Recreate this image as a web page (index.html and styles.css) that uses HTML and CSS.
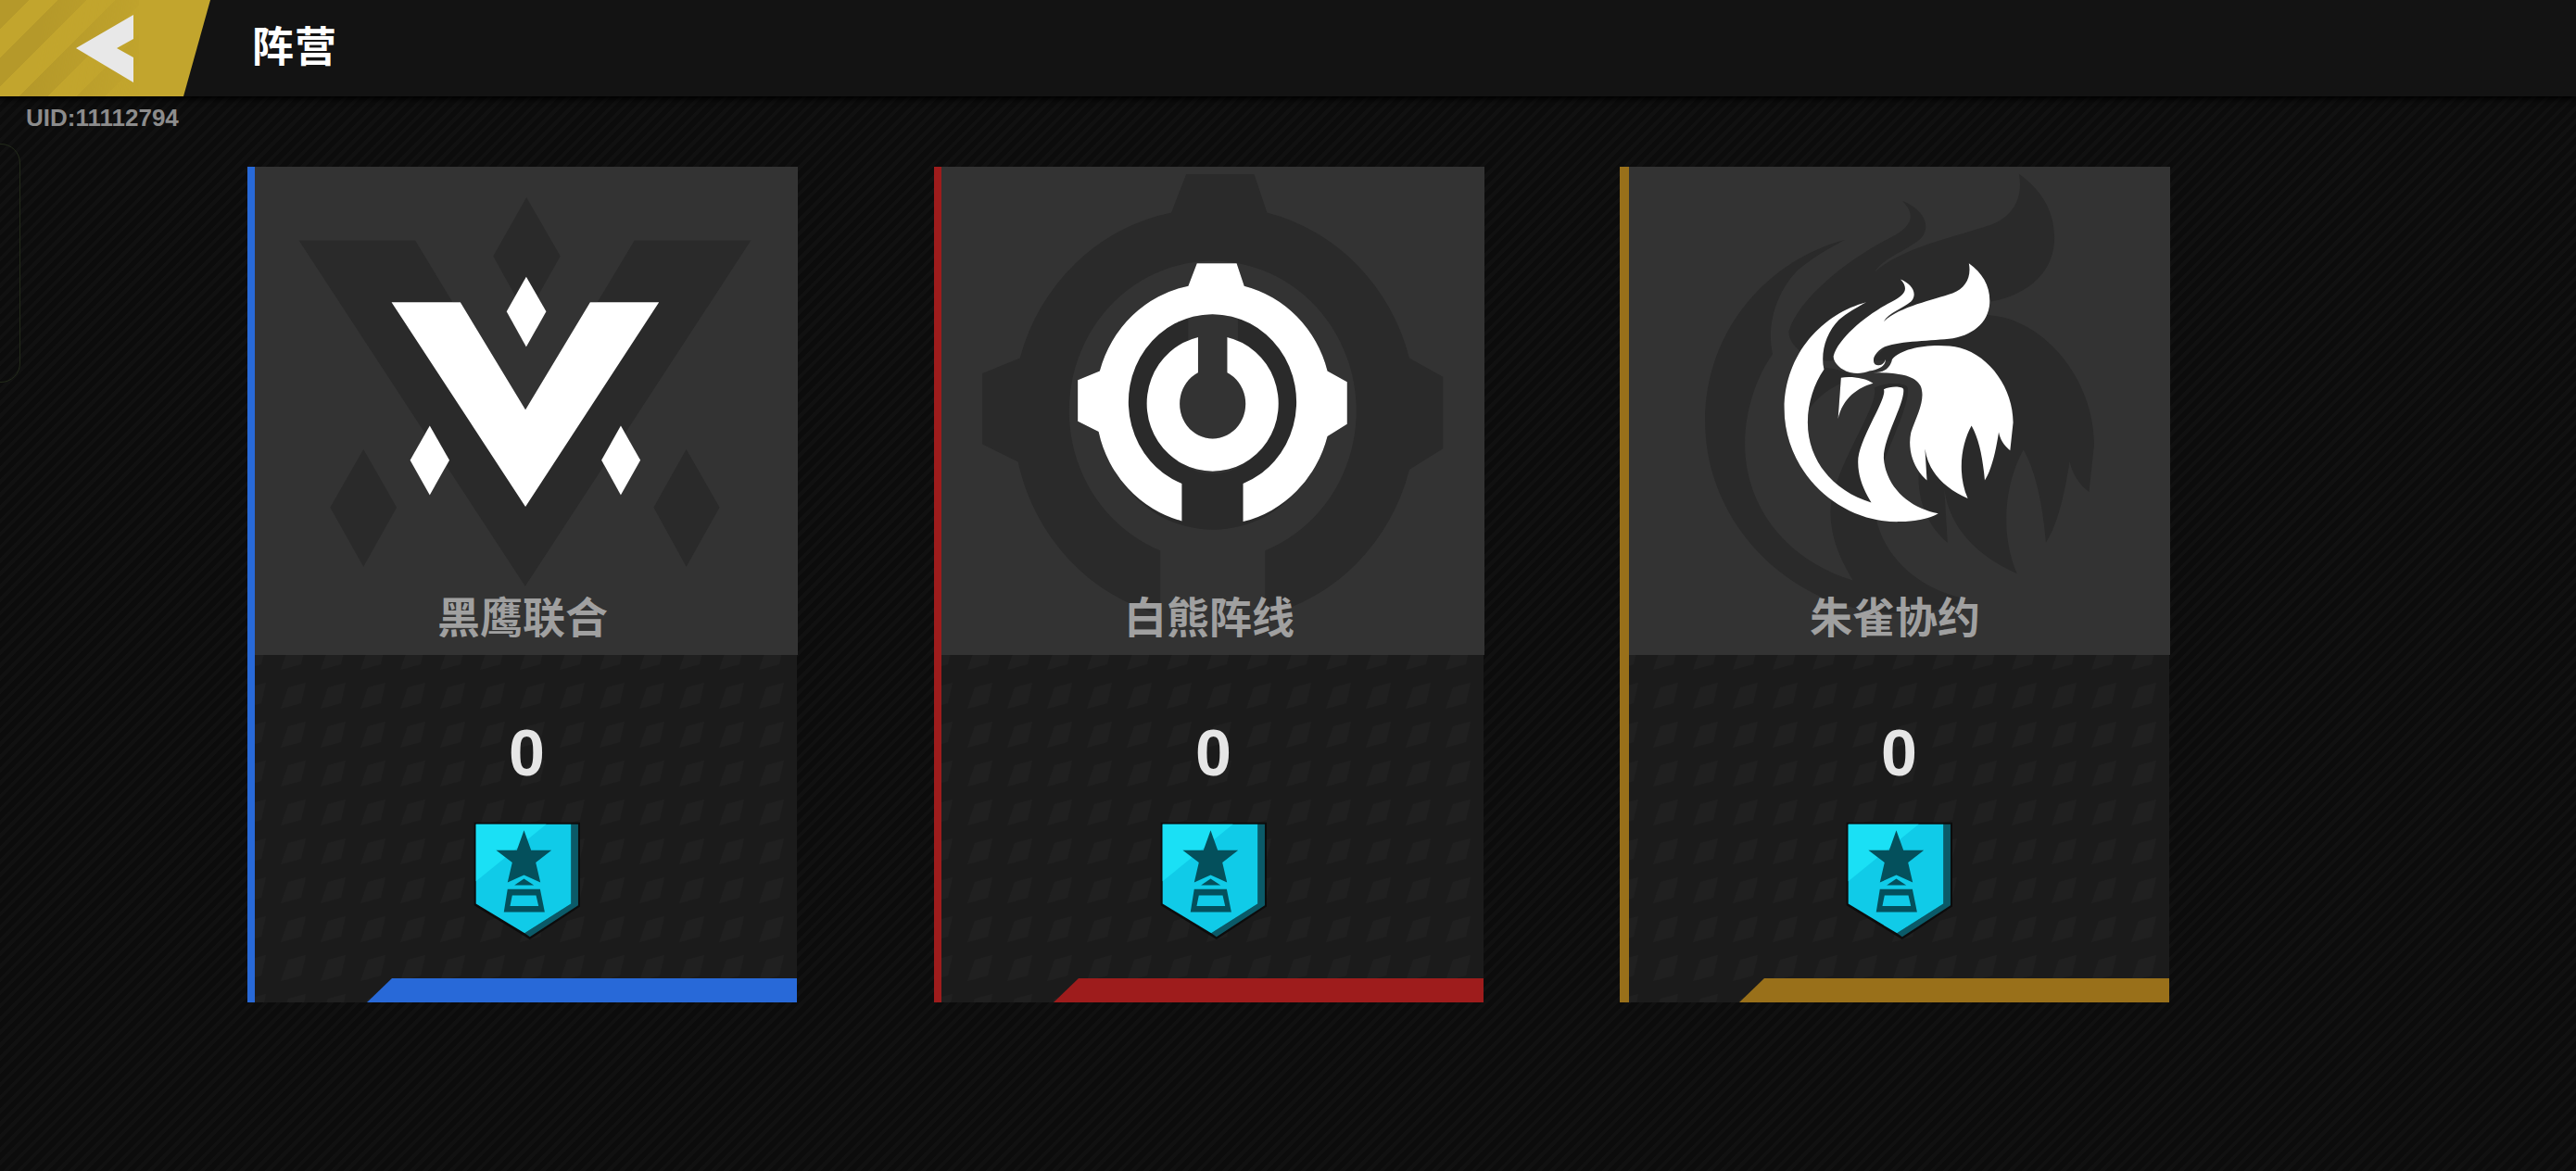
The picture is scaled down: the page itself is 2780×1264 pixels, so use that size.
FILE: index.html
```html
<!DOCTYPE html>
<html lang="zh-CN">
<head>
  <meta charset="UTF-8">
  <title>阵营</title>
  <link rel="stylesheet" href="styles.css">
</head>
<body>

<div class="topbar">
  <button class="back" aria-label="返回">
    <svg class="back-arrow" viewBox="0 0 62 73" aria-hidden="true">
      <polygon points="0,36 62,0 62,26 44,36 62,46 62,73"/>
    </svg>
  </button>
  <h1 class="page-title">阵营</h1>
</div>

<div class="uid">UID:11112794</div>
<div class="side-tab"></div>

<div class="cards">

  <div class="card card-blue">
    <div class="card-top">
      <svg class="logo" viewBox="42 28 1455 1469" preserveAspectRatio="none" aria-hidden="true">
        <g id="logo-eagle">
          <polygon points="423,437 605,437 777,762 948,437 1130,437 777,1055"/>
          <polygon points="779,360 832,465 779,572 727,465"/>
          <polygon points="524,810 576,914 524,1020 472,914"/>
          <polygon points="1029,810 1081,914 1029,1020 978,914"/>
        </g>
        <use href="#logo-eagle" class="logo-shadow" transform="translate(778 707) scale(1.69) translate(-778 -707)"/>
        <use href="#logo-eagle" class="logo-main"/>
      </svg>
      <div class="card-name">黑鹰联合</div>
    </div>
    <div class="card-bottom">
      <div class="score">0</div>
      <svg class="badge" viewBox="90 80 350 380" aria-hidden="true">
        <polygon class="badge-edge" points="92,82 434,82 434,354 272,460 92,350"/>
        <polygon class="badge-side" points="405,88 428,88 428,350 272,452 255,440 405,345"/>
        <polygon class="badge-face" points="98,88 405,88 405,345 255,440 98,345"/>
        <polygon class="badge-shine" points="98,88 325,88 98,272"/>
        <polygon class="badge-mark" points="253,108 276,172 342,172 291,212 306,276 253,252 200,276 215,212 163,172 230,172"/>
        <polygon class="badge-mark" points="222,285 253,264 285,285"/>
        <path class="badge-mark" fill-rule="evenodd" d="M200,298 L305,298 L320,372 L188,372 Z M215,318 L208,352 L300,352 L292,318 Z"/>
      </svg>
      <div class="card-bar"></div>
    </div>
  </div>

  <div class="card card-red">
    <div class="card-top">
      <svg class="logo" viewBox="20 28 1455 1469" preserveAspectRatio="none" aria-hidden="true">
        <g id="logo-gear">
          <path d="M715,320 L820,320 L840,388 A303,360 0 0 1 1060,645 L1112,678 L1112,805 L1060,842 A303,360 0 0 1 837,1100 L837,985 A222,265 0 1 0 675,985 L675,1098 A303,360 0 0 1 455,828 L400,797 L400,672 L458,645 A303,360 0 0 1 692,388 Z"/>
          <path d="M718,543 L718,650 A87,105 0 1 0 795,650 L795,543 A174,205 0 1 1 718,543 Z"/>
        </g>
        <use href="#logo-gear" class="logo-shadow" transform="translate(755 700) scale(1.71) translate(-755 -700)"/>
        <use href="#logo-gear" class="logo-main"/>
      </svg>
      <div class="card-name">白熊阵线</div>
    </div>
    <div class="card-bottom">
      <div class="score">0</div>
      <svg class="badge" viewBox="90 80 350 380" aria-hidden="true">
        <polygon class="badge-edge" points="92,82 434,82 434,354 272,460 92,350"/>
        <polygon class="badge-side" points="405,88 428,88 428,350 272,452 255,440 405,345"/>
        <polygon class="badge-face" points="98,88 405,88 405,345 255,440 98,345"/>
        <polygon class="badge-shine" points="98,88 325,88 98,272"/>
        <polygon class="badge-mark" points="253,108 276,172 342,172 291,212 306,276 253,252 200,276 215,212 163,172 230,172"/>
        <polygon class="badge-mark" points="222,285 253,264 285,285"/>
        <path class="badge-mark" fill-rule="evenodd" d="M200,298 L305,298 L320,372 L188,372 Z M215,318 L208,352 L300,352 L292,318 Z"/>
      </svg>
      <div class="card-bar"></div>
    </div>
  </div>

  <div class="card card-gold">
    <div class="card-top">
      <svg class="logo" viewBox="20 28 1455 1469" preserveAspectRatio="none" aria-hidden="true">
        <g id="logo-bird">
          <path d="M672,437 C560,470 455,590 455,760 C455,950 600,1105 760,1100 C800,1100 840,1090 862,1075 C790,1060 725,1000 718,910 C715,850 775,740 770,700 C768,690 735,690 718,700 C728,730 650,850 650,920 C650,970 668,1010 685,1042 C590,1010 517,920 517,800 C517,740 535,680 560,640 C550,590 565,530 600,490 C620,470 650,450 672,437 Z"/>
          <path d="M585,600 C600,540 680,470 740,435 C775,415 785,395 762,368 C790,380 810,410 790,435 C770,455 730,470 718,495 C760,450 850,430 900,410 C935,395 950,360 943,320 C980,350 1000,390 998,440 C995,500 950,540 890,548 C830,555 750,555 715,575 C695,590 685,610 695,625 C705,632 720,625 722,610 C725,625 710,640 680,645 C660,655 630,655 610,640 C595,630 585,615 585,600 Z"/>
          <path d="M605,665 C630,660 670,665 690,682 C650,695 610,725 597,790 Z"/>
          <path d="M690,650 C720,650 735,635 740,610 C770,570 860,560 920,575 C1000,600 1060,700 1060,800 L1052,885 C1035,870 1025,850 1022,830 C1015,880 1005,940 985,975 C980,910 970,850 950,810 C925,860 910,950 940,1030 C880,1000 835,950 827,880 L832,975 C795,940 780,880 790,830 C805,780 830,730 815,690 C800,655 750,650 690,650 Z"/>
        </g>
        <use href="#logo-bird" class="logo-shadow" transform="translate(754 706) scale(1.7) translate(-754 -706)"/>
        <use href="#logo-bird" class="logo-main"/>
      </svg>
      <div class="card-name">朱雀协约</div>
    </div>
    <div class="card-bottom">
      <div class="score">0</div>
      <svg class="badge" viewBox="90 80 350 380" aria-hidden="true">
        <polygon class="badge-edge" points="92,82 434,82 434,354 272,460 92,350"/>
        <polygon class="badge-side" points="405,88 428,88 428,350 272,452 255,440 405,345"/>
        <polygon class="badge-face" points="98,88 405,88 405,345 255,440 98,345"/>
        <polygon class="badge-shine" points="98,88 325,88 98,272"/>
        <polygon class="badge-mark" points="253,108 276,172 342,172 291,212 306,276 253,252 200,276 215,212 163,172 230,172"/>
        <polygon class="badge-mark" points="222,285 253,264 285,285"/>
        <path class="badge-mark" fill-rule="evenodd" d="M200,298 L305,298 L320,372 L188,372 Z M215,318 L208,352 L300,352 L292,318 Z"/>
      </svg>
      <div class="card-bar"></div>
    </div>
  </div>

</div>

</body>
</html>
```

FILE: styles.css
```css
* {
  box-sizing: border-box;
  margin: 0;
  padding: 0;
}

body {
  position: relative;
  width: 2780px;
  height: 1264px;
  overflow: hidden;
  background-color: #0e0e0e;
  background-image: repeating-linear-gradient(135deg, #0c0c0c 0 6px, #111 6px 10px);
  color: #fff;
  font-family: "Noto Sans CJK SC", "Liberation Sans", sans-serif;
}

.topbar {
  display: flex;
  align-items: center;
  height: 104px;
  background: #131313;
  box-shadow: 0 3px 6px #000;
}

.back {
  position: relative;
  display: flex;
  align-items: center;
  flex: none;
  width: 227px;
  height: 104px;
  padding-left: 82px;
  border: none;
  background: #c2a52d;
  clip-path: polygon(0 0, 100% 0, 198px 100%, 0 100%);
}

.back::before {
  content: "";
  position: absolute;
  inset: 0 auto 0 0;
  width: 150px;
  background: repeating-linear-gradient(135deg, #b5992a 0 22px, #c2a52d 22px 44px);
  -webkit-mask-image: linear-gradient(100deg, #000 30%, transparent 100%);
  mask-image: linear-gradient(100deg, #000 30%, transparent 100%);
}

.back-arrow {
  position: relative;
  width: 62px;
  height: 73px;
  fill: #e8e8e8;
}

.page-title {
  margin-left: 45px;
  margin-top: -10px;
  font-size: 45px;
  font-weight: 700;
  line-height: 1;
  letter-spacing: 1px;
}

.uid {
  margin-top: 9px;
  padding-left: 28px;
  font-family: "Liberation Sans", sans-serif;
  font-size: 26px;
  font-weight: 700;
  line-height: 28px;
  color: #8c8c8c;
}

.side-tab {
  position: absolute;
  top: 155px;
  left: -20px;
  width: 42px;
  height: 258px;
  border: 1px solid #232b1a;
  border-radius: 22px;
}

.cards {
  display: flex;
  gap: 147px;
  margin-top: 39px;
  padding-left: 267px;
}

.card {
  position: relative;
  display: flex;
  flex-direction: column;
  width: 594px;
  height: 902px;
}

.card::before {
  content: "";
  position: absolute;
  top: 0;
  left: 0;
  z-index: 1;
  width: 8px;
  height: 100%;
  background: var(--accent);
}

.card-blue { --accent: #2869d8; }
.card-red { --accent: #9e1c1c; }
.card-gold { --accent: #99701a; margin-left: -1px; }
.card-gold::before { width: 10px; }

.card-top {
  display: grid;
  flex: none;
  height: 527px;
  background: #333;
}

.logo {
  grid-area: 1 / 1;
  width: 594px;
  height: 525px;
}

.logo-shadow {
  fill: #2a2a2a;
}

.logo-main {
  fill: #fff;
}

.card-name {
  grid-area: 1 / 1;
  align-self: end;
  height: 66px;
  font-size: 46px;
  font-weight: 700;
  line-height: 44px;
  text-align: center;
  color: #a0a0a0;
}

.card-bottom {
  display: flex;
  flex: 1;
  flex-direction: column;
  align-items: center;
  margin-right: 1px;
  padding-left: 10px;
  padding-top: 71px;
  background-color: #1b1b1b;
  background-image: url("data:image/svg+xml,%3Csvg xmlns='http://www.w3.org/2000/svg' width='43' height='42'%3E%3Cpolygon points='8,5 27,0 22,22 0,28' fill='%23202020'/%3E%3C/svg%3E");
  background-position: 36px 30px;
}

.score {
  font-family: "Liberation Sans", sans-serif;
  font-size: 70px;
  font-weight: 700;
  line-height: 70px;
  color: #e6e6e6;
}

.badge {
  width: 117px;
  height: 127px;
  margin-top: 39px;
  margin-left: 2px;
}

.badge-edge { fill: #0c0c0c; }
.badge-side { fill: #0b5a68; }
.badge-face { fill: #10cbe8; }
.badge-shine { fill: #1ae0f5; }
.badge-mark { fill: #04505c; }

.card-bar {
  align-self: flex-end;
  width: 464px;
  height: 26px;
  margin-top: auto;
  background: var(--accent);
  clip-path: polygon(27px 0, 100% 0, 100% 100%, 0 100%);
}
```
